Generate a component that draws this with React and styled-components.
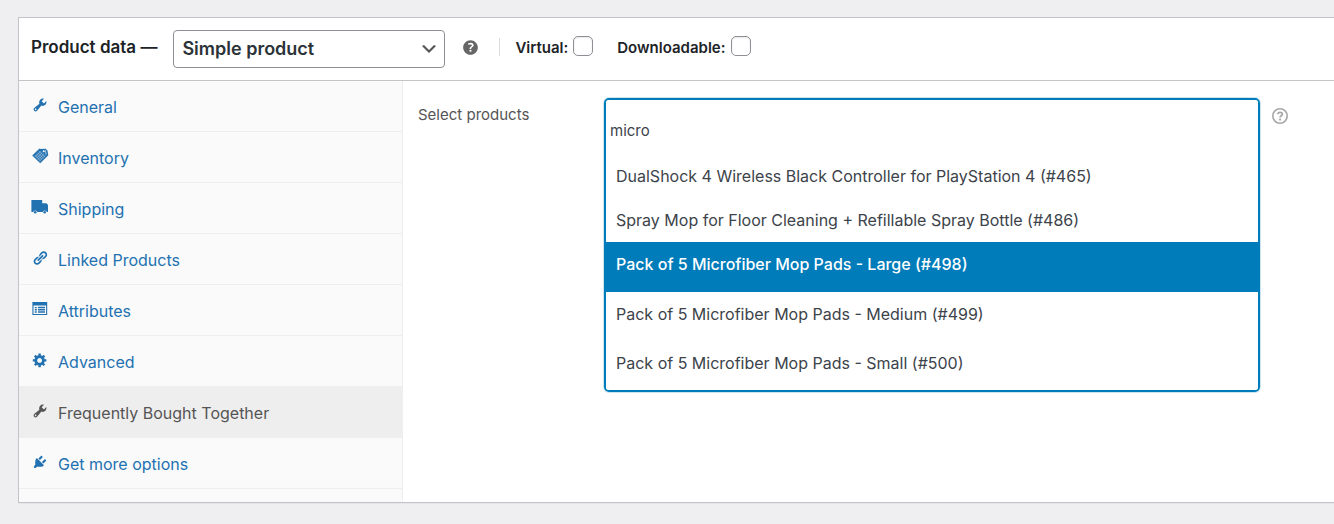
import React, { useState } from "react";
import styled, { createGlobalStyle } from "styled-components";

const GlobalStyle = createGlobalStyle`
  *, *::before, *::after { box-sizing: border-box; }
  body {
    margin: 0;
    background: #efeff1;
    color: #3c434a;
    font-family: Inter, "Liberation Sans", sans-serif;
    font-size: 16px;
    line-height: 24px;
  }
`;

const Page = styled.main`
  padding: 17px 0 21px 18px;
`;

const Panel = styled.section`
  background: #fff;
  border: 1px solid #c3c4c7;
  border-right: 0;
  box-shadow: 0 1px 1px rgba(0, 0, 0, 0.04);
`;

const PanelHeader = styled.header`
  display: flex;
  align-items: center;
  padding: 12px;
  border-bottom: 1px solid #c3c4c7;
  color: #1d2327;
`;

const Title = styled.h2`
  margin: 0 16px 4px 0;
  font-size: 17px;
  font-weight: 600;
  line-height: 24px;
  white-space: nowrap;
`;

const SelectWrap = styled.div`
  display: grid;
  align-items: center;
  width: 272px;

  > * {
    grid-area: 1 / 1;
  }

  > svg {
    justify-self: end;
    margin-right: 6px;
    pointer-events: none;
  }
`;

const TypeSelect = styled.select`
  appearance: none;
  width: 100%;
  height: 38px;
  padding: 0 32px 0 8px;
  border: 1px solid #8c8f94;
  border-radius: 4px;
  background: #fff;
  color: #2c3338;
  font: inherit;
  font-size: 18px;
  font-weight: 600;
`;

const HelpButton = styled.button`
  display: flex;
  flex: none;
  margin: ${(p) => p.$margin};
  padding: 0;
  border: 0;
  background: none;
  color: ${(p) => p.$color};
  cursor: help;
`;

const Flags = styled.div`
  display: flex;
  align-items: center;
  gap: 24px;
  margin-bottom: 4px;
  padding-left: 16px;
  background: linear-gradient(#dcdcde, #dcdcde) left center / 1px 18px no-repeat;
`;

const Flag = styled.label`
  display: flex;
  align-items: center;
  gap: 5px;
  padding-top: 1px;
  font-size: 15px;
  font-weight: 600;
  white-space: nowrap;
`;

const CheckBox = styled.input`
  appearance: none;
  width: 20px;
  height: 20px;
  margin: 0 0 4px;
  border: 1px solid #8c8f94;
  border-radius: 5px;
  background: #fff;
  box-shadow: inset 0 1px 2px rgba(0, 0, 0, 0.1);

  &:checked {
    background: #2271b1;
  }
`;

const PanelBody = styled.div`
  display: flex;
`;

const Tabs = styled.nav`
  flex: none;
  width: 384px;
  padding-bottom: 13px;
  border-right: 1px solid #eee;
  background: #fafafa;
`;

const TabList = styled.ul`
  margin: 0;
  padding: 0;
  list-style: none;
`;

const Tab = styled.a`
  display: flex;
  align-items: center;
  gap: 10px;
  height: 51px;
  padding: 2px 13px 0;
  border-bottom: 1px solid #eee;
  background: ${(p) => (p.$active ? "#eee" : "transparent")};
  color: ${(p) => (p.$active ? "#555" : "#2271b1")};
  text-decoration: none;

  > svg {
    flex: none;
    margin-bottom: 4px;
  }
`;

const Content = styled.div`
  display: flex;
  flex: 1;
  align-items: flex-start;
  min-width: 0;
  padding: 17px 46px 17px 15px;
`;

const FieldLabel = styled.label`
  flex: none;
  width: 186px;
  padding-top: 5px;
  color: #555;
  font-size: 15px;
`;

const Combo = styled.div`
  flex: 1;
  min-width: 0;
  overflow: hidden;
  border: 2px solid #007cba;
  border-radius: 5px;
  box-shadow: 0 0 0 1px rgba(0, 124, 186, 0.2);
`;

const Search = styled.input`
  display: block;
  width: 100%;
  height: 54px;
  padding: 6px 4px 0;
  border: 0;
  outline: 0;
  background: #fff;
  color: #3c434a;
  font: inherit;
  font-size: 15px;
`;

const Options = styled.ul`
  margin: 0;
  padding: 0;
  list-style: none;
`;

const Option = styled.li`
  padding: 10px 10px ${(p) => p.$end}px;
  background: ${(p) => (p.$active ? "#007cba" : "#fff")};
  color: ${(p) => (p.$active ? "#fff" : "#3c434a")};
  font-weight: ${(p) => (p.$active ? 500 : 400)};
  cursor: pointer;
`;

const Icon = ({ size = 16, children }) => (
  <svg width={size} height={size} viewBox="0 0 20 20" fill="currentColor" aria-hidden="true">
    {children}
  </svg>
);

const Wrench = () => (
  <Icon>
    <path d="M16.68 9.77c-1.34 1.34-3.3 1.67-4.95.99l-5.41 6.52c-.99.99-2.59.99-3.58 0s-.99-2.59 0-3.57l6.52-5.42c-.68-1.65-.35-3.61.99-4.95 1.28-1.28 3.12-1.62 4.72-1.06l-2.89 2.89 2.82 2.82 2.86-2.87c.53 1.58.18 3.39-1.08 4.65zM3.81 16.21c.4.39 1.04.39 1.43 0 .4-.4.4-1.04 0-1.43-.39-.4-1.03-.4-1.43 0-.39.39-.39 1.03 0 1.43z" />
  </Icon>
);

const PriceTags = () => (
  <svg width="16" height="16" viewBox="0 0 16 16" fill="currentColor" overflow="visible" aria-hidden="true">
    <path
      fillRule="evenodd"
      d="M.2 7.400 7.500.4l1.200.6 5.400-.2.300 1 1 .5.900 4.900L8.200 15.300zM11.700 2.300a1 1 0 1 0 .1 2 1 1 0 0 0-.1-2z"
    />
    <path
      d="M2.900 7.300l5.700 5.600M4.300 5.900l5.700 5.600M5.700 4.500l5.700 5.600M7.100 3.200l5.700 5.600M2.900 9l5.800-5.800M4.400 10.400l6-6M5.800 11.800l6.200-6.200M7.300 13.200l6.200-6.200"
      stroke="#fafafa"
      strokeOpacity=".65"
      strokeWidth=".6"
      fill="none"
    />
    <path d="M13.400 2.100l.7 4.700" stroke="#fafafa" strokeWidth=".6" fill="none" />
  </svg>
);

const Truck = () => (
  <svg width="16" height="16" viewBox="0 0 16 16" fill="currentColor" overflow="visible" aria-hidden="true">
    <path d="M-.6 1h10.800v3.200h4.300l1.500 1.800v7.100h-1.200a2.100 2.100 0 0 0-4.100 0H5.300a2.100 2.100 0 0 0-4.100 0H-.6z" />
    <circle cx="3.200" cy="13.300" r="1.300" />
    <circle cx="12.700" cy="13.300" r="1.300" />
  </svg>
);

const Link = () => (
  <Icon>
    <path d="M17.74 2.76c1.68 1.69 1.68 4.41 0 6.1l-1.53 1.52c-1.12 1.12-2.7 1.47-4.14 1.09l2.62-2.61.76-.77.76-.76c.84-.84.84-2.2 0-3.04-.84-.85-2.2-.85-3.04 0l-.77.76-3.38 3.38c-.37-1.44-.02-3.02 1.1-4.14l1.52-1.53c1.69-1.68 4.42-1.68 6.1 0zM8.59 13.43l5.34-5.34c.42-.42.42-1.1 0-1.52-.44-.43-1.13-.39-1.53 0l-5.33 5.34c-.42.42-.42 1.1 0 1.52.44.43 1.13.39 1.52 0zm-.76 2.29l4.14-4.15c.38 1.44.03 3.02-1.09 4.14l-1.52 1.53c-1.69 1.68-4.41 1.68-6.1 0-1.68-1.68-1.68-4.42 0-6.1l1.53-1.52c1.12-1.12 2.7-1.47 4.14-1.1l-4.14 4.15c-.85.84-.85 2.2 0 3.05.84.84 2.2.84 3.04 0z" />
  </Icon>
);

const ListView = () => (
  <svg width="16" height="16" viewBox="0 0 16 16" fill="currentColor" aria-hidden="true">
    <path
      fillRule="evenodd"
      d="M.4 1h14.800v13H.4zM1.500 4.500v8.400h12.600V4.500zM2.800 5.900h2v1.400h-2zM6 5.700h7v1.600H6zM2.800 8.100h2v1.400h-2zM6 8h7v1.600H6zM2.800 10.300h2v1.400h-2zM6 10.300h7v1.500H6z"
    />
  </svg>
);

const Gear = () => (
  <Icon>
    <path d="M18 12h-2.18c-.17.7-.44 1.35-.81 1.93l1.54 1.54-2.1 2.1-1.54-1.54c-.58.36-1.23.63-1.91.79V19H8v-2.18c-.68-.16-1.33-.43-1.91-.79l-1.54 1.54-2.12-2.12 1.54-1.54c-.36-.58-.63-1.23-.79-1.91H1V9.03h2.17c.16-.7.44-1.35.8-1.94L2.43 5.55l2.1-2.1 1.54 1.54c.58-.37 1.24-.64 1.93-.81V2h3v2.18c.68.16 1.33.43 1.91.79l1.54-1.54 2.12 2.12-1.54 1.54c.36.59.64 1.24.8 1.94H18V12zm-8.5 1.5c1.66 0 3-1.34 3-3s-1.34-3-3-3-3 1.34-3 3 1.34 3 3 3z" />
  </Icon>
);

const Plug = () => (
  <Icon>
    <path d="M13.11 4.36L9.87 7.6 8 5.73l3.24-3.24c.35-.34 1.05-.2 1.56.32.52.51.66 1.21.31 1.55zm-8 1.77l.91-1.12 9.01 9.01-1.19.84c-.71.71-2.63 1.16-3.82 1.16H6.14L4.9 17.26c-.59.59-1.54.59-2.12 0-.59-.58-.59-1.53 0-2.12l1.24-1.24v-3.88c0-1.13.4-3.19 1.09-3.89zm7.26 3.97l3.24-3.24c.34-.35 1.04-.21 1.55.31.52.51.66 1.21.31 1.55l-3.24 3.25z" />
  </Icon>
);

const HelpSolid = () => (
  <Icon size={21}>
    <path d="M17 10c0-3.87-3.14-7-7-7-3.87 0-7 3.13-7 7s3.13 7 7 7c3.86 0 7-3.13 7-7zm-6.3 1.48H9.14v-.43c0-.38.08-.7.24-.98s.46-.57.88-.89c.41-.29.68-.53.81-.71.14-.18.2-.39.2-.62 0-.25-.09-.44-.28-.58-.19-.13-.45-.19-.79-.19-.58 0-1.25.15-2 .46l-.64-1.28c.87-.49 1.8-.74 2.77-.74.81 0 1.45.2 1.92.58.48.39.71.91.71 1.55 0 .43-.09.8-.29 1.11-.19.32-.57.67-1.11 1.06-.38.28-.61.49-.71.63-.1.15-.15.34-.15.57v.46zm-1.47 2.36c-.18-.17-.27-.42-.27-.73 0-.33.08-.58.26-.75s.43-.25.77-.25c.32 0 .57.09.75.26s.27.42.27.74c0 .3-.09.55-.27.72-.18.18-.43.27-.75.27-.33 0-.58-.09-.76-.26z" />
  </Icon>
);

const HelpOutline = () => (
  <svg width="16" height="16" viewBox="0 0 16 16" fill="none" stroke="currentColor" aria-hidden="true">
    <circle cx="8" cy="8" r="7.200" strokeWidth="1.600" />
    <path d="M5.800 6.300C5.800 5 6.700 4.300 8 4.300s2.300.7 2.300 1.900c0 1.500-2.200 1.700-2.200 3.200" strokeWidth="1.800" />
    <circle cx="8.100" cy="11.600" r="1.100" fill="currentColor" stroke="none" />
  </svg>
);

const Chevron = () => (
  <svg width="20" height="20" viewBox="0 0 20 20" fill="#555" aria-hidden="true">
    <path d="M5 6l5 5 5-5 2 1-7 7-7-7 2-1z" />
  </svg>
);

const TABS = [
  ["General", Wrench],
  ["Inventory", PriceTags],
  ["Shipping", Truck],
  ["Linked Products", Link],
  ["Attributes", ListView],
  ["Advanced", Gear],
  ["Frequently Bought Together", Wrench],
  ["Get more options", Plug],
];

const PRODUCTS = [
  { name: "DualShock 4 Wireless Black Controller for PlayStation 4 (#465)", end: 10 },
  { name: "Spray Mop for Floor Cleaning + Refillable Spray Bottle (#486)", end: 10 },
  { name: "Pack of 5 Microfiber Mop Pads - Large (#498)", end: 16 },
  { name: "Pack of 5 Microfiber Mop Pads - Medium (#499)", end: 15 },
  { name: "Pack of 5 Microfiber Mop Pads - Small (#500)", end: 15 },
];

export default function App() {
  const [query, setQuery] = useState("micro");
  const [tab, setTab] = useState("Frequently Bought Together");
  const [active, setActive] = useState(2);

  return (
    <>
      <GlobalStyle />
      <Page>
        <Panel>
          <PanelHeader>
            <Title>Product data —</Title>
            <SelectWrap>
              <TypeSelect aria-label="Product type" defaultValue="simple">
                <option value="simple">Simple product</option>
              </TypeSelect>
              <Chevron />
            </SelectWrap>
            <HelpButton type="button" aria-label="Product type help" $color="#666" $margin="0 18px 4px 15px">
              <HelpSolid />
            </HelpButton>
            <Flags>
              <Flag>
                Virtual:
                <CheckBox type="checkbox" />
              </Flag>
              <Flag>
                Downloadable:
                <CheckBox type="checkbox" />
              </Flag>
            </Flags>
          </PanelHeader>
          <PanelBody>
            <Tabs aria-label="Product data sections">
              <TabList>
                {TABS.map(([name, TabIcon]) => (
                  <li key={name}>
                    <Tab href="#" $active={name === tab} onClick={() => setTab(name)}>
                      <TabIcon />
                      {name}
                    </Tab>
                  </li>
                ))}
              </TabList>
            </Tabs>
            <Content>
              <FieldLabel htmlFor="product-search">Select products</FieldLabel>
              <Combo>
                <Search
                  id="product-search"
                  type="text"
                  role="combobox"
                  aria-expanded="true"
                  aria-controls="product-options"
                  autoComplete="off"
                  value={query}
                  onChange={(e) => setQuery(e.target.value)}
                />
                <Options id="product-options" role="listbox">
                  {PRODUCTS.map((product, i) => (
                    <Option
                      key={product.name}
                      role="option"
                      aria-selected={i === active}
                      $active={i === active}
                      $end={product.end}
                      onMouseEnter={() => setActive(i)}
                    >
                      {product.name}
                    </Option>
                  ))}
                </Options>
              </Combo>
              <HelpButton type="button" aria-label="Select products help" $color="#a7a7a7" $margin="10px 0 0 12px">
                <HelpOutline />
              </HelpButton>
            </Content>
          </PanelBody>
        </Panel>
      </Page>
    </>
  );
}
